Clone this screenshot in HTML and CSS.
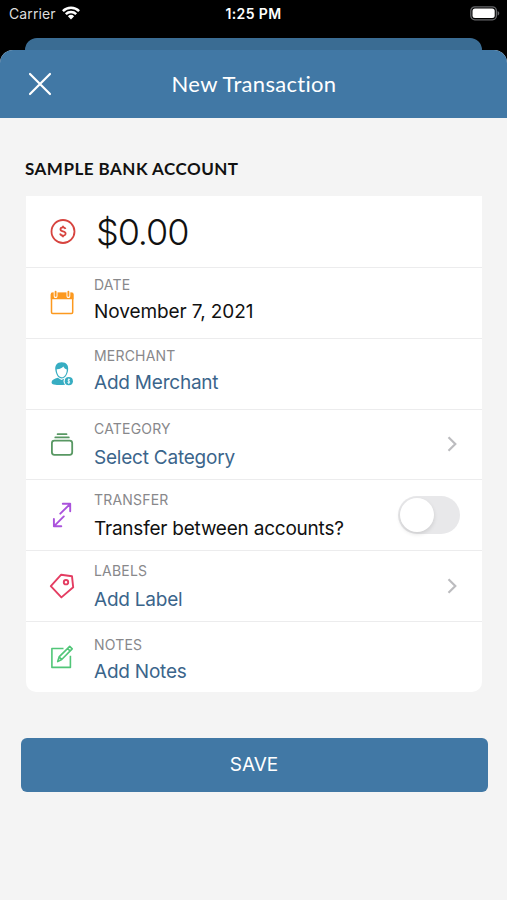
FILE: index.html
```html
<!DOCTYPE html>
<html lang="en">
<head>
<meta charset="utf-8">
<title>New Transaction</title>
<link rel="stylesheet" href="styles.css">
</head>
<body>
<div class="status">
  <div class="carrier"><span>Carrier</span>
    <svg width="18" height="14" viewBox="0 0 18 14" fill="none" stroke="#fff" stroke-width="2.5"><path d="M.9 5.1a11.6 11.6 0 0 1 16.2 0M3.8 8.2a7.5 7.5 0 0 1 10.4 0"/><path d="M9 13.4 5.9 10.3a4.5 4.5 0 0 1 6.2 0z" fill="#fff" stroke="none"/></svg>
  </div>
  <span class="clock">1:25 PM</span>
  <svg class="battery" width="30" height="15" viewBox="0 0 30 15"><rect x=".8" y=".8" width="25.6" height="13" rx="4" fill="none" stroke="#66676a" stroke-width="1.3"/><rect x="2.5" y="2.5" width="22.2" height="9.6" rx="2.5" fill="#fff"/><path d="M27.6 5c2.2.8 2.2 3.8 0 4.6z" fill="#66676a"/></svg>
</div>
<div class="behind"></div>
<main class="sheet">
  <header class="bar">
    <svg class="close" width="24" height="24" viewBox="0 0 24 24" fill="none" stroke="#fff" stroke-width="2.2" stroke-linecap="round"><path d="M2 2l20 20M22 2 2 22"/></svg>
    <h1>New Transaction</h1>
  </header>
  <h2>SAMPLE BANK ACCOUNT</h2>
  <section class="card">
    <div class="row">
      <svg class="icon" viewBox="0 0 28 28" fill="none" stroke="#d7443f" stroke-width="1.8"><circle cx="15" cy="14.5" r="11.5"/><path d="M17.5 12c-.4-1.3-1.4-1.7-2.5-1.7-3 0-3.4 3-.8 3.8 1.1.4 3.4.5 3.4 2.5 0 2.7-4.9 2.7-5.5-.1M15 8.7v1.6M15 18.5v1.8"/></svg>
      <div class="amount">$0.00</div>
    </div>
    <div class="row">
      <svg class="icon" viewBox="0 0 28 28"><rect x="3.5" y="4.4" width="21.2" height="20" rx="1.2" fill="none" stroke="#fc991f" stroke-width="1.5"/><path d="M2.8 5q0-1.4 1.5-1.4h19.6q1.6 0 1.6 1.4v5.2H2.8z" fill="#fc991f"/><path d="M7.6 3.2v4M20.4 3.2v4" stroke="#fff" stroke-width="3.8" stroke-linecap="round"/><path d="M7.6 2.8v4.1M20.4 2.8v4.1" stroke="#fc991f" stroke-width="1.9" stroke-linecap="round"/></svg>
      <div class="copy"><span class="label">DATE</span><span class="value date">November 7, 2021</span></div>
    </div>
    <div class="row">
      <svg class="icon" viewBox="0 0 28 28"><path d="M13.7 2.2c-4.8 0-7.1 3.4-6.3 8 .7 4.9 3.3 8.2 6.3 8.2s5.7-3.3 6.4-8.2c.7-4.8-1.6-8-6.4-8z" fill="#37adc2"/><path d="M8.7 9.3c3.6.1 5.4-1.6 6.6-2.8.9 1.5 2 2.6 3.5 2.9-.1 4.6-2.3 7.8-5.1 7.8s-4.9-3.2-5-7.9z" fill="#fff"/><path d="M9.8 17.7c-3.4 1-5.9 2-6.2 4.2-.2 1.5.8 2.2 2.2 2.5 3.7.8 8 .8 11.3.3-2-2-2-4.3-.8-6.1l-2.8 1.5z" fill="#37adc2"/><circle cx="20.8" cy="21.2" r="4.1" fill="#37adc2"/><path d="M22 19.8c-1.7-1.2-3 .6-1.2 1.3 2 .8.5 2.6-1.3 1.3M20.8 18.5v5.4" fill="none" stroke="#fff" stroke-width=".9"/></svg>
      <div class="copy"><span class="label">MERCHANT</span><a class="value">Add Merchant</a></div>
    </div>
    <div class="row mid">
      <svg class="icon" viewBox="0 0 28 28" fill="none" stroke="#589863" stroke-width="1.8" stroke-linecap="round"><rect x="3.9" y="10.6" width="20.3" height="14.2" rx="2.5"/><path d="M7.3 7.4h13.5M9.6 4.2h8.9"/></svg>
      <div class="copy"><span class="label">CATEGORY</span><a class="value">Select Category</a></div>
      <svg class="chevron" viewBox="0 0 10 16"><path d="m1.5 1.3 6.8 6.7-6.8 6.7"/></svg>
    </div>
    <div class="row mid">
      <svg class="icon" viewBox="0 0 28 28" fill="none" stroke="#aa52dc" stroke-width="1.9" stroke-linecap="round" stroke-linejoin="round"><path d="M14.8 2.8h7.4v7.4M22.2 2.8 12.3 12.7M5.9 17.9v7.4h7.4M5.9 25.3l9.9-9.9"/></svg>
      <div class="copy"><span class="label">TRANSFER</span><span class="value">Transfer between accounts?</span></div>
      <div class="switch"><div class="knob"></div></div>
    </div>
    <div class="row mid">
      <svg class="icon" viewBox="0 0 28 28" fill="none" stroke="#e43d62" stroke-width="1.9" stroke-linejoin="round"><path d="M2.8 14.2 13.2 2.7l10.8 1.6 1.2 11-11.8 10.1z"/><circle cx="18" cy="10.2" r="2.2"/></svg>
      <div class="copy"><span class="label">LABELS</span><a class="value">Add Label</a></div>
      <svg class="chevron" viewBox="0 0 10 16"><path d="m1.5 1.3 6.8 6.7-6.8 6.7"/></svg>
    </div>
    <div class="row notes">
      <svg class="icon" viewBox="0 0 28 28" fill="none" stroke="#51c678" stroke-width="1.6" stroke-linejoin="round"><path d="M15.5 5.5H3.9v18.9h18.5V12.7"/><path d="m9.7 18.6 1.4-4.7L21.7 3.4l2.5 2.5-10.5 10.6zM19.6 5.5l2.4 2.4M11.2 14l2.4 2.4"/></svg>
      <div class="copy"><span class="label">NOTES</span><a class="value">Add Notes</a></div>
    </div>
  </section>
  <button class="save">SAVE</button>
</main>
</body>
</html>
```
FILE: styles.css
```css
* { box-sizing: border-box; }
body {
  margin: 0;
  height: 900px;
  background: #000;
  font-family: Inter, sans-serif;
  display: flex;
  flex-direction: column;
  overflow: hidden;
}
.status {
  height: 38px;
  padding: 0 7px 0 9px;
  display: grid;
  grid-template-columns: 1fr auto 1fr;
  align-items: start;
  color: #fff;
  font-size: 14px;
  line-height: 28px;
}
.carrier { display: flex; gap: 6px; letter-spacing: 0.1px; color: #ddd; }
.carrier svg { margin-top: 6px; }
.clock {
  font-weight: 600;
  font-size: 14px;
  letter-spacing: 0.4px;
  margin-right: 2px;
}
.battery { justify-self: end; margin-top: 6px; }
.behind {
  height: 12px;
  margin: 0 25px;
  border-radius: 12px 12px 0 0;
  background: #3a6c93;
}
.sheet {
  flex: 1;
  background: #f4f4f4;
  border-radius: 13px 13px 0 0;
  overflow: hidden;
}
.bar {
  height: 68px;
  padding: 0 28px;
  display: grid;
  grid-template-columns: 24px 1fr 24px;
  align-items: center;
  background: #4178a5;
}
h1 {
  margin: 0;
  padding-left: 1px;
  color: #fff;
  text-align: center;
  font: 400 22px/30px Lato, sans-serif;
  letter-spacing: 0.3px;
}
h2 {
  margin: 38px 25px 15px;
  color: #111;
  font: 700 17px/25px Lato, sans-serif;
  letter-spacing: 0.48px;
}
.card {
  height: 496px;
  margin: 0 25px 0 26px;
  display: grid;
  grid-template-rows: repeat(7, 1fr);
  background: #fff;
  border-radius: 0 0 10px 10px;
}
.row {
  display: flex;
  align-items: center;
  padding: 0 22px;
}
.row + .row { border-top: 1.5px solid #ececed; }
.icon { width: 28px; height: 28px; flex: none; }
.copy {
  flex: 1;
  align-self: flex-start;
  padding: 9px 0 0 18px;
  display: flex;
  flex-direction: column;
  gap: 8px;
  white-space: nowrap;
}
.mid .copy { padding-top: 11.5px; gap: 10px; }
.notes .copy { padding-top: 15px; }
.label {
  font-size: 14px;
  line-height: 16px;
  letter-spacing: 0.2px;
  color: #88888b;
}
.value {
  font-size: 19px;
  line-height: 24px;
  height: 20px;
  margin-top: -1px;
  letter-spacing: -0.22px;
  color: #111;
}
.date { letter-spacing: -0.08px; }
a.value { color: #3b658b; }
.amount {
  margin: 2px 0 0 20px;
  font-size: 36px;
  font-weight: 300;
  line-height: 44px;
  letter-spacing: -1.1px;
  color: #111;
}
.chevron {
  width: 10px;
  height: 16px;
  margin-right: 3px;
  fill: none;
  stroke: #bcbcbf;
  stroke-width: 2.2;
}
.switch {
  width: 62px;
  height: 38px;
  padding: 2px;
  border-radius: 19px;
  background: #e8e8ea;
}
.knob {
  width: 34px;
  height: 34px;
  border-radius: 50%;
  background: #fff;
  box-shadow: 0 2px 4px rgba(0, 0, 0, 0.12);
}
.save {
  display: block;
  width: 467px;
  height: 54px;
  margin: 45.5px 0 0 20.5px;
  padding: 0;
  border: 0;
  border-radius: 6px;
  background: #4178a5;
  color: #fff;
  font: 400 19px/54px Inter, sans-serif;
}
```
